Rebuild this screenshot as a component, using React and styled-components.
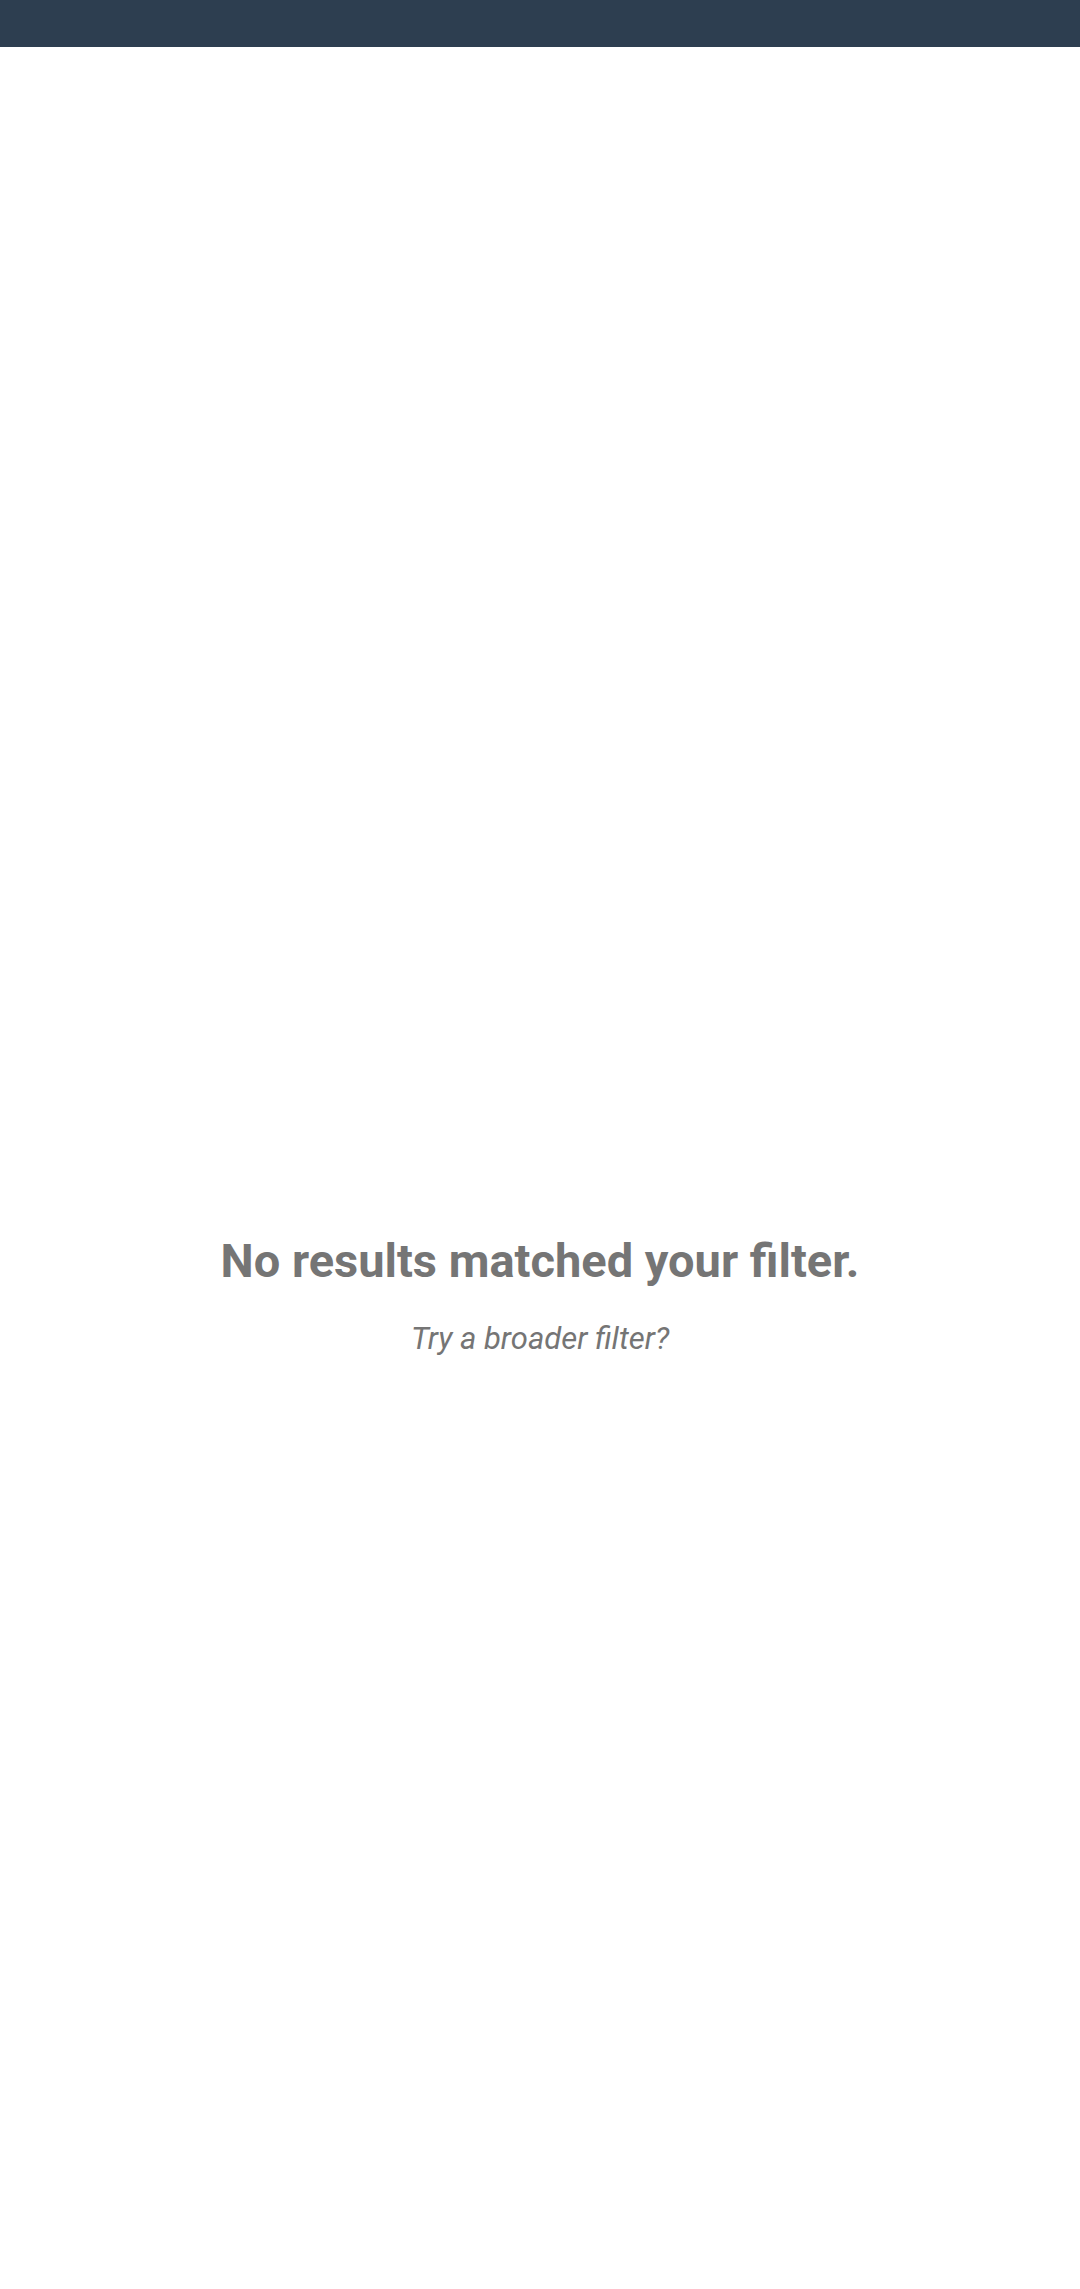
import React from "react";
import styled, { createGlobalStyle } from "styled-components";

const GlobalStyle = createGlobalStyle`
  html, body {
    margin: 0;
    padding: 0;
    background: #ffffff;
    font-family: Roboto, "Liberation Sans", Arial, sans-serif;
  }
  * { box-sizing: border-box; }
`;

const Page = styled.div`
  min-height: 2289px;
  display: flex;
  flex-direction: column;
  background: #ffffff;
`;

const TopBar = styled.header`
  height: 47px;
  background: #2d3e50;
  flex-shrink: 0;
`;

const Empty = styled.main`
  display: flex;
  flex-direction: column;
  align-items: center;
  padding-top: 1186px;
  color: #757575;
`;

const Title = styled.h1`
  margin: 0;
  font-size: 47px;
  font-weight: 700;
  line-height: 55px;
  text-align: center;
`;

const Hint = styled.p`
  margin: 33px 0 0;
  font-size: 31px;
  font-style: italic;
  font-weight: 400;
  line-height: 36px;
  text-align: center;
`;

export default function App() {
  return (
    <>
      <GlobalStyle />
      <Page>
        <TopBar />
        <Empty>
          <Title>No results matched your filter.</Title>
          <Hint>Try a broader filter?</Hint>
        </Empty>
      </Page>
    </>
  );
}
